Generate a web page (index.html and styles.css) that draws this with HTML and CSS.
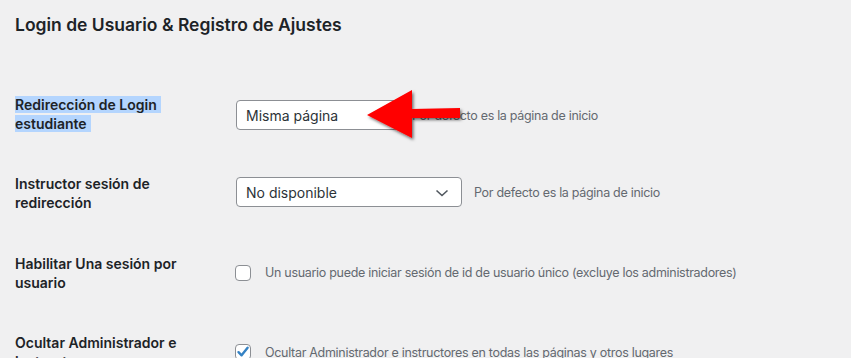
FILE: index.html
```html
<!DOCTYPE html>
<html lang="es">
<head>
<meta charset="utf-8">
<link rel="stylesheet" href="styles.css">
</head>
<body>
<div class="wrap">
  <h2 class="title">Login de Usuario &amp; Registro de Ajustes</h2>
  <div class="table">
    <div class="row row-1">
      <div class="label"><span class="sel">Redirección de Login</span><br><span class="sel">estudiante</span></div>
      <div class="field field-select">
        <div class="select select-narrow"><span>Misma página</span></div>
        <span class="desc">Por defecto es la página de inicio</span>
      </div>
    </div>
    <div class="row row-2">
      <div class="label">Instructor sesión de<br>redirección</div>
      <div class="field field-select">
        <div class="select select-wide"><span>No disponible</span>
          <svg class="chev" width="14" height="8" viewBox="0 0 14 8"><path d="M1.5 1.5 L7 6.5 L12.5 1.5" fill="none" stroke="#50575e" stroke-width="1.6"/></svg>
        </div>
        <span class="desc">Por defecto es la página de inicio</span>
      </div>
    </div>
    <div class="row row-3">
      <div class="label">Habilitar Una sesión por<br>usuario</div>
      <div class="field field-check">
        <span class="check"></span>
        <span class="desc">Un usuario puede iniciar sesión de id de usuario único (excluye los administradores)</span>
      </div>
    </div>
    <div class="row row-4">
      <div class="label">Ocultar Administrador e<br>instructores</div>
      <div class="field field-check">
        <span class="check checked"><svg width="14" height="14" viewBox="0 0 14 14"><path d="M2.5 7.2 L5.6 10.3 L11.6 2.8" fill="none" stroke="#3582c4" stroke-width="2.4" stroke-linecap="round" stroke-linejoin="round"/></svg></span>
        <span class="desc">Ocultar Administrador e instructores en todas las páginas y otros lugares</span>
      </div>
    </div>
  </div>
  <svg class="arrow" width="120" height="70" viewBox="0 0 120 70">
    <defs>
      <filter id="sh" x="-20%" y="-30%" width="150%" height="170%">
        <feDropShadow dx="1.5" dy="2" stdDeviation="1.5" flood-color="#000" flood-opacity="0.55"/>
      </filter>
    </defs>
    <polygon points="7,30 52,5 52,24 100,23 100,33 52,33 52,53" fill="#ff0000" filter="url(#sh)"/>
  </svg>
</div>
</body>
</html>
```
FILE: styles.css
```css
html, body {
  margin: 0;
  padding: 0;
  background: #f0f0f1;
}
body {
  font-family: "Inter", "Liberation Sans", sans-serif;
  color: #1d2327;
  width: 851px;
  height: 358px;
  overflow: hidden;
}
.wrap {
  position: relative;
  padding-left: 15px;
}
.title {
  margin: 0;
  padding-top: 13px;
  font-size: 17.5px;
  font-weight: 600;
  line-height: 24px;
  color: #1d2327;
}
.table {
  margin-top: 58px;
}
.row {
  display: flex;
  height: 79.4px;
}
.label {
  width: 221px;
  flex: none;
  font-size: 14px;
  font-weight: 600;
  line-height: 19px;
  color: #1d2327;
}
.sel {
  background: #b4d5fe;
  padding-right: 4px;
}
.field {
  display: flex;
  align-items: center;
}
.field-select {
  height: 30px;
}
.row-1 .field { margin-top: 5px; }
.row-2 .field { margin-top: 3px; }
.row-3 .field { margin-top: 9px; height: 20px; }
.row-4 .field { margin-top: 9px; height: 20px; }
.select {
  box-sizing: border-box;
  height: 30px;
  background: #fff;
  border: 1px solid #8c8f94;
  border-radius: 4px;
  display: flex;
  align-items: center;
  justify-content: space-between;
  padding: 0 12px 0 9px;
  font-size: 14px;
  color: #2c3338;
}
.select-narrow { width: 164px; }
.select-wide { width: 226px; }
.chev { margin-top: 1px; }
.desc {
  font-size: 12.5px;
  letter-spacing: -0.3px;
  color: #646970;
  margin-left: 12px;
}
.check {
  box-sizing: border-box;
  width: 16px;
  height: 16px;
  border: 1px solid #8c8f94;
  border-radius: 4px;
  background: #fff;
  display: flex;
  align-items: center;
  justify-content: center;
  margin-left: -1px;
}
.field-check .desc { margin-left: 14px; }
.arrow {
  position: absolute;
  left: 360px;
  top: 85px;
}
```
